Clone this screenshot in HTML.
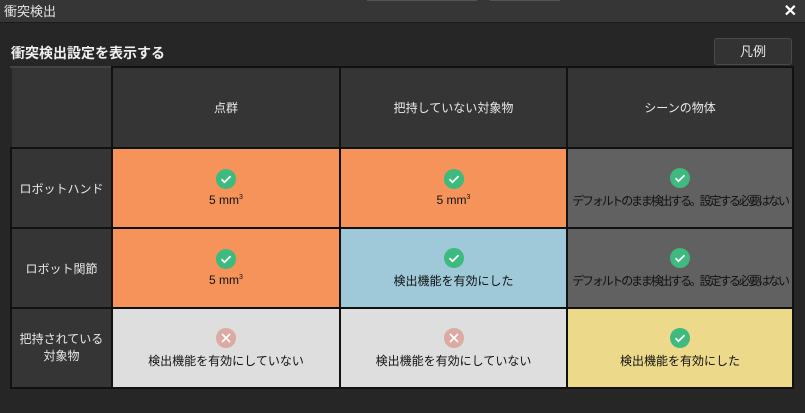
<!DOCTYPE html>
<html><head><meta charset="utf-8"><style>
*{margin:0;padding:0;box-sizing:border-box}
body{width:805px;height:413px;background:#262626;font-family:"Liberation Sans","Noto Sans CJK JP",sans-serif;overflow:hidden;position:relative}
.tb{position:absolute;left:0;top:0;width:805px;height:23px;background:#363636;border-bottom:1px solid #1a1a1a;color:#e6e6e6;font-size:13px;line-height:24px;padding-left:4px}
.tbtop{position:absolute;top:0;height:1px;background:#555}
.x{position:absolute;right:8px;top:0;color:#fff;font-size:16px;font-weight:bold;line-height:24px}
h1{position:absolute;left:11px;top:43px;font-size:14px;font-weight:bold;color:#f0f0f0}
.btn{position:absolute;left:714px;top:38px;width:78px;height:27px;background:#333;border:1px solid #4a4a4a;border-radius:3px;color:#e6e6e6;font-size:13px;text-align:center;line-height:25px}
table{position:absolute;left:10px;top:66px;border-collapse:collapse;table-layout:fixed}
td{border:2px solid #111;text-align:center;vertical-align:middle;font-size:12px;color:#111}
.h{background:#353535;color:#e8e8e8}
.o{background:#f5935a}.b{background:#9fc8d9}.g{background:#616161;white-space:nowrap;font-size:12px;letter-spacing:-2.2px;overflow:hidden}.l{background:#dedede}.y{background:#ecd98a}
.i{display:block;margin:0 auto 4px;width:20px;height:20px}
sup{font-size:7px}
</style></head><body>
<div class="tb">衝突検出<span class="x">✕</span></div>
<div class="tbtop" style="left:367px;width:110px"></div>
<div class="tbtop" style="left:490px;width:70px"></div>
<h1>衝突検出設定を表示する</h1>
<div class="btn">凡例</div>
<table>
<colgroup><col style="width:101px"><col style="width:228px"><col style="width:227px"><col style="width:226px"></colgroup>
<tr style="height:81px"><td class="h" style="border-top-color:#444;border-left-color:#262626"></td><td class="h">点群</td><td class="h">把持していない対象物</td><td class="h">シーンの物体</td></tr>
<tr style="height:80px"><td class="h">ロボットハンド</td>
<td class="o"><svg class="i" viewBox="0 0 20 20"><circle cx="10" cy="10" r="10" fill="#3dba7e"/><path d="M5.5 10.2l3 3 6-6" stroke="#fff" stroke-width="1.8" fill="none"/></svg>5 mm<sup>3</sup></td>
<td class="o"><svg class="i" viewBox="0 0 20 20"><circle cx="10" cy="10" r="10" fill="#3dba7e"/><path d="M5.5 10.2l3 3 6-6" stroke="#fff" stroke-width="1.8" fill="none"/></svg>5 mm<sup>3</sup></td>
<td class="g"><svg class="i" viewBox="0 0 20 20"><circle cx="10" cy="10" r="10" fill="#3dba7e"/><path d="M5.5 10.2l3 3 6-6" stroke="#fff" stroke-width="1.8" fill="none"/></svg>デフォルトのまま検出する。設定する必要はない</td></tr>
<tr style="height:80px"><td class="h">ロボット関節</td>
<td class="o"><svg class="i" viewBox="0 0 20 20"><circle cx="10" cy="10" r="10" fill="#3dba7e"/><path d="M5.5 10.2l3 3 6-6" stroke="#fff" stroke-width="1.8" fill="none"/></svg>5 mm<sup>3</sup></td>
<td class="b"><svg class="i" viewBox="0 0 20 20"><circle cx="10" cy="10" r="10" fill="#3dba7e"/><path d="M5.5 10.2l3 3 6-6" stroke="#fff" stroke-width="1.8" fill="none"/></svg>検出機能を有効にした</td>
<td class="g"><svg class="i" viewBox="0 0 20 20"><circle cx="10" cy="10" r="10" fill="#3dba7e"/><path d="M5.5 10.2l3 3 6-6" stroke="#fff" stroke-width="1.8" fill="none"/></svg>デフォルトのまま検出する。設定する必要はない</td></tr>
<tr style="height:80px"><td class="h" style="line-height:17px">把持されている<br>対象物</td>
<td class="l"><svg class="i" viewBox="0 0 20 20"><circle cx="10" cy="10" r="10" fill="#dbaaa3"/><path d="M6 6l8 8M14 6l-8 8" stroke="#fff" stroke-width="1.6"/></svg>検出機能を有効にしていない</td>
<td class="l"><svg class="i" viewBox="0 0 20 20"><circle cx="10" cy="10" r="10" fill="#dbaaa3"/><path d="M6 6l8 8M14 6l-8 8" stroke="#fff" stroke-width="1.6"/></svg>検出機能を有効にしていない</td>
<td class="y"><svg class="i" viewBox="0 0 20 20"><circle cx="10" cy="10" r="10" fill="#3dba7e"/><path d="M5.5 10.2l3 3 6-6" stroke="#fff" stroke-width="1.8" fill="none"/></svg>検出機能を有効にした</td></tr>
</table>
</body></html>
